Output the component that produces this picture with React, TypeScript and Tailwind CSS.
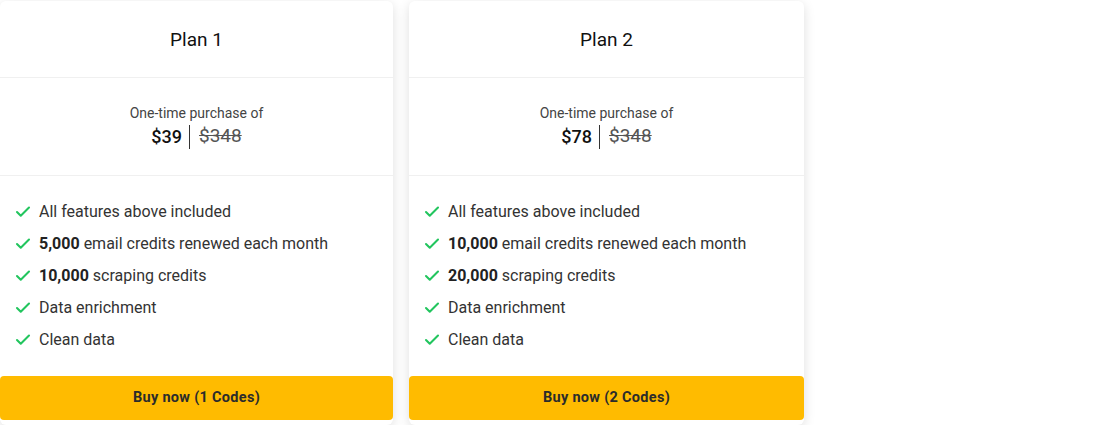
import { Check } from 'lucide-react';

type Plan = { name: string; price: string; email: string; scraping: string; codes: number };

const plans: Plan[] = [
  { name: 'Plan 1', price: '$39', email: '5,000', scraping: '10,000', codes: 1 },
  { name: 'Plan 2', price: '$78', email: '10,000', scraping: '20,000', codes: 2 },
];

function Feature({ children }: { children: React.ReactNode }) {
  return (
    <li className="flex items-center h-8">
      <Check className="w-[18px] h-[18px] text-[#22c55e] mr-[7px] ml-[14px]" strokeWidth={2.75} />
      <span className="text-[16px] text-[#333]">{children}</span>
    </li>
  );
}

function PlanCard({ plan, width }: { plan: Plan; width: string }) {
  return (
    <div className={`${width} bg-white rounded-md shadow-[0_3px_12px_rgba(0,0,0,0.13)] flex flex-col`}>
      <div className="h-[77px] flex items-center justify-center border-b border-[#f0f0f0]">
        <h2 className="text-[19px] text-[#111] pt-[3px]">{plan.name}</h2>
      </div>
      <div className="h-[98px] flex flex-col items-center justify-center border-b border-[#f0f0f0] pb-[1px]">
        <p className="text-[14px] text-[#444] leading-5">One-time purchase of</p>
        <div className="flex items-center mt-[1px] h-[26px]">
          <span className="text-[18px] font-medium text-[#111] pr-[7px]">{plan.price}</span>
          <span className="w-px h-[24px] bg-[#333]" />
          <span className="text-[19px] text-[#555] line-through pl-[9px]">$348</span>
        </div>
      </div>
      <ul className="pt-[20px] pb-[20px]">
        <Feature>All features above included</Feature>
        <Feature><b className="font-bold text-[#222]">{plan.email}</b> email credits renewed each month</Feature>
        <Feature><b className="font-bold text-[#222]">{plan.scraping}</b> scraping credits</Feature>
        <Feature>Data enrichment</Feature>
        <Feature>Clean data</Feature>
      </ul>
      <button className="h-[44px] bg-[#ffbb00] rounded-[4px] text-[14.5px] font-bold text-[#2b2b2b] tracking-[0.3px]">
        Buy now ({plan.codes} Codes)
      </button>
    </div>
  );
}

export default function App() {
  return (
    <div className="w-[1100px] h-[425px] bg-white pt-px flex gap-4 font-['Roboto',sans-serif]">
      <PlanCard plan={plans[0]} width="w-[393px]" />
      <PlanCard plan={plans[1]} width="w-[395px]" />
    </div>
  );
}
